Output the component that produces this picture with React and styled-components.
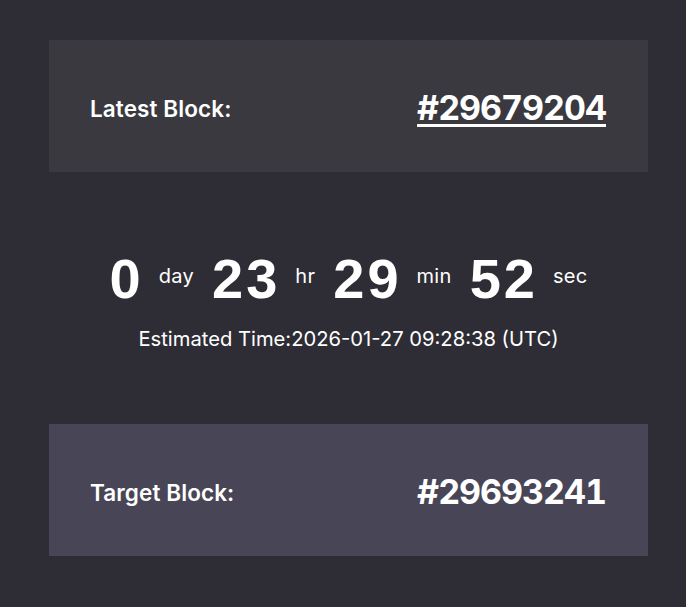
import React from 'react';
import styled, { createGlobalStyle } from 'styled-components';

const GlobalStyle = createGlobalStyle`
  html, body {
    margin: 0;
    padding: 0;
    background: #2e2d36;
  }
  body {
    font-family: Inter, "Noto Sans", sans-serif;
    color: #ffffff;
  }
`;

const Page = styled.div`
  width: 599px;
  padding: 40px 0 51px 49px;
  display: flex;
  flex-direction: column;
`;

const BlockCard = styled.div`
  height: 132px;
  padding: 0 42px 0 41px;
  display: flex;
  align-items: center;
  justify-content: space-between;
  background: ${(p) => (p.$target ? '#484656' : '#3a393f')};
`;

const Label = styled.span`
  font-size: 22.5px;
  font-weight: 600;
  letter-spacing: 0.1px;
  margin-top: 4px;
`;

const BlockNumber = styled.a`
  font-size: 34px;
  font-weight: 700;
  letter-spacing: -1px;
  font-feature-settings: "tnum";
  color: #ffffff;
  text-decoration: ${(p) => (p.$link ? 'underline' : 'none')};
  text-decoration-thickness: 3px;
  text-underline-offset: 4px;
  margin-top: 2px;
`;

const Countdown = styled.div`
  padding: 79px 0 73px;
  display: flex;
  flex-direction: column;
  align-items: center;
`;

const TimerRow = styled.div`
  display: flex;
  align-items: flex-start;
  gap: 18px;
`;

const Value = styled.span`
  font-family: "Liberation Sans", Arial, sans-serif;
  font-size: 56px;
  font-weight: 700;
  line-height: 55px;
  letter-spacing: 3px;
  margin-right: -3px;
`;

const Unit = styled.span`
  font-size: 20px;
  line-height: 24px;
  font-weight: 400;
  letter-spacing: 0.3px;
  padding-top: 13px;
`;

const Estimate = styled.div`
  margin-top: 20px;
  font-size: 20.2px;
  font-weight: 400;
`;

const parts = [
  ['0', 'day'],
  ['23', 'hr'],
  ['29', 'min'],
  ['52', 'sec'],
];

export default function App() {
  return (
    <>
      <GlobalStyle />
      <Page>
        <BlockCard>
          <Label>Latest Block:</Label>
          <BlockNumber $link href="#">#29679204</BlockNumber>
        </BlockCard>
        <Countdown>
          <TimerRow>
            {parts.map(([v, u]) => (
              <React.Fragment key={u}>
                <Value>{v}</Value>
                <Unit>{u}</Unit>
              </React.Fragment>
            ))}
          </TimerRow>
          <Estimate>Estimated Time:2026-01-27 09:28:38 (UTC)</Estimate>
        </Countdown>
        <BlockCard $target>
          <Label>Target Block:</Label>
          <BlockNumber>#29693241</BlockNumber>
        </BlockCard>
      </Page>
    </>
  );
}
